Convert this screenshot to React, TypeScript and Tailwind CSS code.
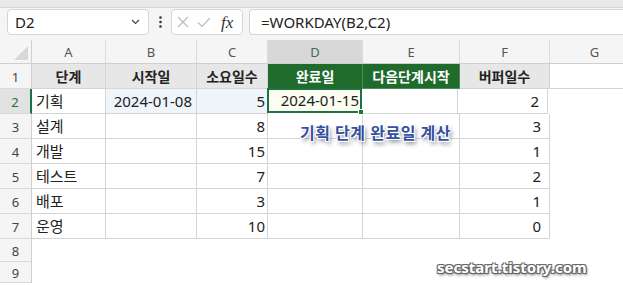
import React from 'react';

const FONT = { fontFamily: '"Noto Sans", "Noto Sans CJK KR", sans-serif' };

const cols = [
  { key: 'A', w: 'w-[74px]' },
  { key: 'B', w: 'w-[91px]' },
  { key: 'C', w: 'w-[71px]' },
  { key: 'D', w: 'w-[95px]' },
  { key: 'E', w: 'w-[97px]' },
  { key: 'F', w: 'w-[90px]' },
  { key: 'G', w: 'w-[90px]' },
];

const rows: { label: string; a: string; b: string; c: string; f: string }[] = [
  { label: '2', a: '기획', b: '2024-01-08', c: '5', f: '2' },
  { label: '3', a: '설계', b: '', c: '8', f: '3' },
  { label: '4', a: '개발', b: '', c: '15', f: '1' },
  { label: '5', a: '테스트', b: '', c: '7', f: '2' },
  { label: '6', a: '배포', b: '', c: '3', f: '1' },
  { label: '7', a: '운영', b: '', c: '10', f: '0' },
];

const RowHead = ({ label, active = false, h = 'h-[25px]' }: { label: string; active?: boolean; h?: string }) => (
  <div
    className={`w-[32px] ${h} shrink-0 flex items-center justify-center text-[13px] pt-[3px] border-b border-[#d9d9d9] ${
      active ? 'bg-[#e2e2e2] text-[#1e7145] border-r-2 border-r-[#1e7145]' : 'bg-[#f5f5f5] text-[#444] border-r border-r-[#cfcfcf]'
    }`}
  >
    {label}
  </div>
);

export default function App() {
  return (
    <div className="relative w-[623px] h-[286px] overflow-hidden bg-white text-[#222]" style={FONT}>
      {/* top strip */}
      <div className="h-[8px] bg-[#e9e9e9] border-b border-[#d6d6d6]" />

      {/* formula bar */}
      <div className="h-[32px] bg-[#f5f5f5] flex items-start pt-[1px] pl-[7px]">
        <div className="w-[142px] h-[26px] bg-white border border-[#d4d4d4] rounded-[4px] flex items-center justify-between pl-[7px] pr-[8px]">
          <span className="text-[15px] text-[#222]">D2</span>
          <svg width="9" height="6" viewBox="0 0 9 6">
            <path d="M1 1 L4.5 4.5 L8 1" fill="none" stroke="#444" strokeWidth="1.2" />
          </svg>
        </div>
        <div className="w-[22px] h-[26px] flex items-center justify-center">
          <svg width="3" height="12" viewBox="0 0 3 12">
            <circle cx="1.5" cy="1.5" r="1.3" fill="#333" />
            <circle cx="1.5" cy="6" r="1.3" fill="#333" />
            <circle cx="1.5" cy="10.5" r="1.3" fill="#333" />
          </svg>
        </div>
        <div className="w-[72px] h-[26px] bg-white border border-[#d4d4d4] rounded-[4px] flex items-center pl-[5px] gap-[8px]">
          <svg width="12" height="12" viewBox="0 0 12 12">
            <path d="M1 1 L11 11 M11 1 L1 11" stroke="#bcbcbc" strokeWidth="1.2" />
          </svg>
          <svg width="14" height="11" viewBox="0 0 14 11">
            <path d="M1 5.5 L5 9.5 L13 1" fill="none" stroke="#bcbcbc" strokeWidth="1.2" />
          </svg>
          <span className="text-[17px] italic text-[#333] leading-none ml-[2px]" style={{ fontFamily: '"Liberation Serif", serif' }}>
            fx
          </span>
        </div>
        <div className="flex-1 ml-[6px] h-[26px] bg-white border border-[#d4d4d4] border-r-0 rounded-l-[4px] flex items-center pl-[11px]">
          <span className="text-[15px] text-[#222]">=WORKDAY(B2,C2)</span>
        </div>
      </div>

      {/* column headers */}
      <div className="flex h-[24px] bg-[#f5f5f5] border-b border-[#cfcfcf]">
        <div className="w-[32px] shrink-0 relative border-r border-[#cfcfcf]">
          <div className="absolute right-[3px] bottom-[3px] w-0 h-0 border-l-[14px] border-l-transparent border-b-[14px] border-b-[#d8d8d8]" />
        </div>
        {cols.map((c) => (
          <div
            key={c.key}
            className={`${c.w} shrink-0 flex items-center justify-center text-[13px] pt-[3px] border-r border-[#dcdcdc] ${
              c.key === 'D' ? 'bg-[#d8d8d8] text-[#3c6b4e]' : 'text-[#555]'
            }`}
          >
            {c.key}
          </div>
        ))}
      </div>

      {/* row 1 */}
      <div className="flex">
        <RowHead label="1" />
        {[
          { t: '단계', w: 'w-[74px]', green: false },
          { t: '시작일', w: 'w-[91px]', green: false },
          { t: '소요일수', w: 'w-[71px]', green: false },
          { t: '완료일', w: 'w-[95px]', green: true },
          { t: '다음단계시작', w: 'w-[97px]', green: true },
          { t: '버퍼일수', w: 'w-[90px]', green: false },
        ].map((h) => (
          <div
            key={h.t}
            className={`${h.w} h-[25px] shrink-0 flex items-center justify-center text-[14px] font-bold border-r border-b ${
              h.green ? 'bg-[#1e6b2c] text-white border-[#4f8a5b]' : 'bg-[#e7e7e7] text-[#222] border-[#d4d4d4]'
            }`}
          >
            {h.t}
          </div>
        ))}
        <div className="w-[90px] h-[25px] shrink-0 border-b border-[#d4d4d4]" />
      </div>

      {/* data rows */}
      {rows.map((r) => {
        const sel = r.label === '2';
        return (
          <div key={r.label} className="flex">
            <RowHead label={r.label} active={sel} />
            <div className="w-[74px] h-[25px] shrink-0 flex items-center pl-[4px] text-[15px] border-r border-b border-[#d4d4d4]">{r.a}</div>
            <div className={`w-[91px] h-[25px] shrink-0 flex items-center justify-end pr-[4px] text-[15px] border-r border-b border-[#d4d4d4] ${sel ? 'bg-[#eff5fb]' : ''}`}>
              {r.b}
            </div>
            <div className={`w-[71px] h-[25px] shrink-0 flex items-center justify-end pr-[2px] text-[15px] border-r border-b border-[#d4d4d4] ${sel ? 'bg-[#eff5fb]' : ''}`}>
              {r.c}
            </div>
            {sel ? (
              <div className="relative w-[95px] h-[25px] shrink-0 flex items-center justify-end pr-[1px] text-[15px] bg-[#fdfdf1] border-2 border-[#1e7145] ml-[-1px] mt-[-1px] mr-[-1px]">
                2024-01-15
                <div className="absolute right-[-4px] bottom-[-4px] w-[6px] h-[6px] bg-[#1e7145] border border-white" />
              </div>
            ) : (
              <div className="w-[95px] h-[25px] shrink-0 border-r border-b border-[#d4d4d4]" />
            )}
            <div className="w-[97px] h-[25px] shrink-0 border-r border-b border-[#d4d4d4]" />
            <div className="w-[90px] h-[25px] shrink-0 flex items-center justify-end pr-[8px] text-[15px] border-r border-b border-[#d4d4d4]">{r.f}</div>
            <div className="w-[90px] h-[25px] shrink-0" />
          </div>
        );
      })}

      {/* empty rows */}
      {['8', '9'].map((n) => (
        <div key={n} className="flex">
          <RowHead label={n} h={n === '8' ? 'h-[23px]' : 'h-[21px]'} />
        </div>
      ))}

      {/* annotation */}
      <div
        className="absolute left-[300px] top-[121px] text-[16px] font-bold text-[#34509e] tracking-[0.5px]"
        style={{
          textShadow:
            '-1px -1px 0 #fff, 1px -1px 0 #fff, -1px 1px 0 #fff, 1px 1px 0 #fff, 0 0 1px #fff, 2px 3px 4px rgba(60,60,80,0.7)',
        }}
      >
        기획 단계 완료일 계산
      </div>

      {/* watermark */}
      <div
        className="absolute left-[437px] top-[256px] text-[15px] font-bold text-white"
        style={{
          textShadow:
            '-1px -1px 0 #666, 1px -1px 0 #666, -1px 1px 0 #666, 1px 1px 0 #666, 1px 2px 3px rgba(0,0,0,0.6)',
        }}
      >
        secstart.tistory.com
      </div>
    </div>
  );
}
